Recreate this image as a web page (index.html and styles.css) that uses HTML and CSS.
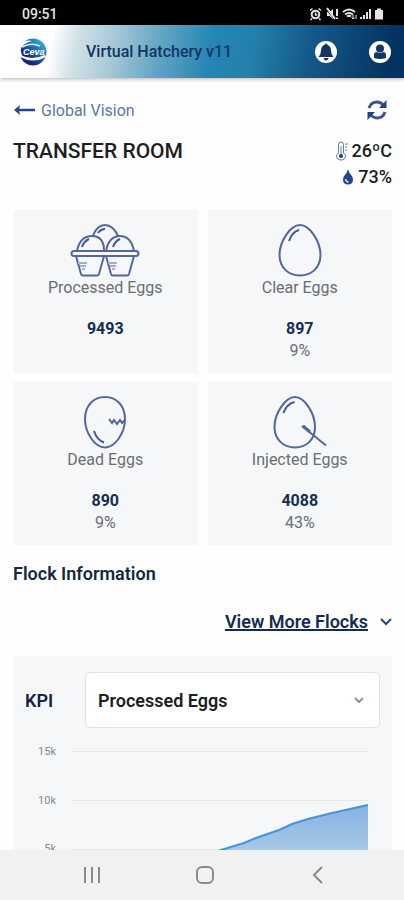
FILE: index.html
```html
<!DOCTYPE html>
<html lang="en">
<head>
<meta charset="utf-8">
<meta name="viewport" content="width=device-width, initial-scale=1">
<title>Virtual Hatchery</title>
<link rel="stylesheet" href="styles.css">
</head>
<body>
<div class="status">
  <time>09:51</time>
  <svg width="76" height="14" viewBox="0 0 76 14" fill="none" stroke="#e4e4e4" aria-hidden="true">
    <circle cx="6.5" cy="7.5" r="3.8" stroke-width="2"/><path d="M1 3.5 3.5 1.5M12 3.5 9.5 1.5M3 11.5 1.5 13M10 11.5l1.5 1.500M6.500 5.500v2.500h2" stroke-width="1.500"/>
    <path d="M18 5h2.500l3.500-3v10l-3.500-3H18z" fill="#e4e4e4" stroke="none"/><path d="m17 2 8 10" stroke="#000"/><path d="m18 1 8 11M28 2v7m0 1.500v1.500" stroke-width="2"/>
    <path d="M34 5q6-5 12 0M36 7.500q4-3 8 0M38 9.500q2-1.500 4 0" stroke-width="2"/><path d="M44 8v4m-1.500-1.500L44 12l1.500-1.500M47 12V8" stroke-width="1"/>
    <path d="M52 12v-2m3 2V8m3 4V5m3 7V2" stroke-width="2"/>
    <path d="M66 3h2V1.500h4V3h2v9.500h-8z" fill="#e4e4e4" stroke="none"/>
  </svg>
</div>
<header class="bar">
  <svg class="logo" width="28" height="28" viewBox="0 0 28 28" role="img" aria-label="Ceva">
    <defs><linearGradient id="globe" x1="0" y1="1" x2="1" y2="0"><stop offset=".3" stop-color="#15277c"/><stop offset=".8" stop-color="#2ba0d0"/></linearGradient></defs>
    <circle cx="14" cy="14" r="13.500" fill="url(#globe)"/>
    <path d="M0 6Q7 1 13 3Q5 5 2 10Q1 13 3 17L0 20z" fill="#fff"/>
    <path d="M2 17Q12 23 26 17L27 19Q14 26 1 19z" fill="#fff"/>
    <path d="M3 9Q12 4 21 8" fill="none" stroke="#dceefa" stroke-width="1.500"/>
    <text x="4" y="17" class="logo-text">Ceva</text>
  </svg>
  <h1 class="brand">Virtual Hatchery v11</h1>
  <div class="actions">
    <button class="round" aria-label="Notifications"><svg width="22" height="22" viewBox="0 0 22 22"><circle cx="11" cy="11" r="11" fill="#fff"/><path d="M11 2.500q1.500 0 1.500 1.500Q16 5 16 9.500q0 4 2.500 6.500h-15Q6 13.500 6 9.500 6 5 9.500 4q0-1.500 1.500-1.500zM8.500 17h5Q13 19.500 11 19.500T8.500 17z" fill="#123564"/></svg></button>
    <button class="round" aria-label="Account"><svg width="22" height="22" viewBox="0 0 22 22"><circle cx="11" cy="11" r="11" fill="#fff"/><circle cx="11" cy="7.500" r="4" fill="#123564"/><path d="M5 17v-3q0-3 3-3 3 2 6 0 3 0 3 3v3q-6 2-12 0z" fill="#123564"/></svg></button>
  </div>
</header>
<main class="page">
  <div class="row top">
    <a class="back" href="#"><svg width="22" height="10" viewBox="0 0 22 10" aria-hidden="true"><path d="M22 5H4" fill="none" stroke="#25458a" stroke-width="2.500"/><path d="M7 0 1 5l6 5-1-5z" fill="#25458a"/></svg>Global Vision</a>
    <button class="refresh" aria-label="Refresh"><svg width="20" height="20" viewBox="0 0 20 20"><path d="M2 8Q4 2 10 2q4 0 6.500 3.500M18 12q-2 6-8 6-4 0-6.500-3.500" fill="none" stroke="#3c5690" stroke-width="3"/><path d="M19.500 0v8H12zM.5 20v-8H8z" fill="#254282"/></svg></button>
  </div>
  <div class="row heading">
    <h2 class="room">TRANSFER ROOM</h2>
    <div class="climate">
      <span class="reading"><svg width="12" height="20" viewBox="0 0 12 20" fill="none" stroke="#6478aa" aria-hidden="true"><path d="M2.500 12V3.500Q2.500 1 5 1t2.500 2.500V12Q9.500 13.500 9.500 15 9.500 19 5 19T.5 15q0-1.500 2-3z"/><path d="M9 3h3M9 6h2M9 9h2"/><path d="M5 5v8"/><circle cx="5" cy="15" r="2" fill="#183b80" stroke="none"/></svg>26ºC</span>
      <span class="reading"><svg width="12" height="16" viewBox="0 0 12 16" aria-hidden="true"><path d="M6 0q1 4 3.500 6.500Q11 8 11 10.500q0 5-5 5t-5-5Q1 8 2.500 6.500 5 4 6 0z" fill="#24458c"/><path d="M3.500 10q.5 3 3 3" fill="none" stroke="#dce5f3" stroke-width="1.500"/></svg>73%</span>
    </div>
  </div>
  <section class="cards">
    <article class="card">
      <svg width="70" height="54" viewBox="0 0 70 54" class="line" aria-hidden="true">
        <path d="M23 13Q27 2 35 2t13 11M7 28Q10 13 22 13t12 15M36 28q3-15 14-15t14 15"/>
        <rect x="1.500" y="28" width="67" height="5" rx="2.500"/>
        <path d="M6 33l5 18q.5 1.500 2 1.500h14q1.500 0 2-1.500l5-18M36 33l5 18q.5 1.500 2 1.500h14q1.500 0 2-1.500l5-18"/>
        <path class="shine" d="M28 10q3-4 7-4M12 24q2-6 7-8M43 24q2-6 7-8"/>
        <path class="soft" d="M8 40h9M10 43h6M12 46h3M38 40h9M40 43h6M42 46h3"/>
      </svg>
      <h3>Processed Eggs</h3><strong>9493</strong>
    </article>
    <article class="card">
      <svg width="70" height="54" viewBox="0 0 70 54" class="line" aria-hidden="true"><path d="M35 2C45 2 55.500 19 55.500 32S46 52.500 35 52.500 14.500 45 14.500 32 25 2 35 2z"/><path class="shine" d="M24 18q3-9 10-11"/></svg>
      <h3>Clear Eggs</h3><strong>897</strong><span>9%</span>
    </article>
    <article class="card">
      <svg width="70" height="54" viewBox="0 0 70 54" class="line" aria-hidden="true"><path d="M35 52.500C25 52.500 15 38 15 24S24 2 35 2s20 8 20 22-10 28.500-20 28.500z"/><path class="shine" d="M24 36q3 9 10 11.500"/><path d="m39 24 3 4 2-3 3 4 3-4 2 3 3-3"/></svg>
      <h3>Dead Eggs</h3><strong>890</strong><span>9%</span>
    </article>
    <article class="card">
      <svg width="70" height="54" viewBox="0 0 70 54" class="line" aria-hidden="true"><path d="M30 2C40 2 50 19 50 32S41 52.500 30 52.500 9.500 45 9.500 32 20 2 30 2z"/><path class="shine" d="M18.500 18q3-9 11-11"/><path d="m37 31 24 19.500"/><path d="m38 31 7 6" class="needle"/></svg>
      <h3>Injected Eggs</h3><strong>4088</strong><span>43%</span>
    </article>
  </section>
  <h2 class="flock">Flock Information</h2>
  <a class="more" href="#"><span>View More Flocks</span><svg width="12" height="8" viewBox="0 0 12 8" aria-hidden="true"><path d="m1 1 5 5 5-5" fill="none" stroke="#294580" stroke-width="2"/></svg></a>
  <section class="panel">
    <div class="kpi">
      <label for="kpi">KPI</label>
      <div class="picker">
        <select id="kpi"><option>Processed Eggs</option><option>Clear Eggs</option><option>Dead Eggs</option><option>Injected Eggs</option></select>
        <svg width="10" height="6" viewBox="0 0 10 6" aria-hidden="true"><path d="m1 1 4 4 4-4" fill="none" stroke="#8c9299" stroke-width="2"/></svg>
      </div>
    </div>
    <div class="chart">
      <div class="ticks"><span>15k</span><span>10k</span><span>5k</span></div>
      <svg class="plot" viewBox="0 0 296 148" preserveAspectRatio="none" role="img" aria-label="Processed eggs over time">
        <defs><linearGradient id="fill" x1="0" y1="0" x2="0" y2="1"><stop offset="0" stop-color="#84b3e2"/><stop offset="1" stop-color="#cfdfec"/></linearGradient></defs>
        <path d="M0 .5h296M0 49.500h296M0 98.500h296M0 147.500h296" stroke="#e5e8eb"/>
        <path d="M0 147 70 130 149 99 172 92 184 87 207 79 220 73 236 68 260 62 296 54V148H0z" fill="url(#fill)"/>
        <path d="M0 147 70 130 149 99 172 92 184 87 207 79 220 73 236 68 260 62 296 54" fill="none" stroke="#4594db" stroke-width="2"/>
      </svg>
    </div>
  </section>
</main>
<nav class="system">
  <button aria-label="Recent apps"><svg width="18" height="18" viewBox="0 0 18 18"><path d="M2 1v16M9 1v16M16 1v16"/></svg></button>
  <button aria-label="Home"><svg width="18" height="18" viewBox="0 0 18 18"><rect x="1" y="1" width="16" height="16" rx="5"/></svg></button>
  <button aria-label="Back"><svg width="18" height="18" viewBox="0 0 18 18"><path d="m13 1-8 8 8 8"/></svg></button>
</nav>
</body>
</html>
```
FILE: styles.css
```css
* { box-sizing: border-box; }
body {
  margin: 0;
  height: 100vh;
  display: flex;
  flex-direction: column;
  background: #fefefe;
  color: #1c1e21;
  font-family: Roboto, "Liberation Sans", sans-serif;
}
h1, h2, h3 { margin: 0; font-weight: 600; }
button { padding: 0; border: 0; background: none; }
svg { display: block; flex: none; }
.status {
  height: 25px;
  flex: none;
  display: flex;
  align-items: center;
  justify-content: space-between;
  padding: 2px 19px 0 22px;
  background: #000;
  color: #e4e4e4;
  font-size: 14px;
  font-weight: 500;
}
.bar {
  height: 53px;
  flex: none;
  display: flex;
  align-items: center;
  padding: 0 13px 0 19px;
  background: linear-gradient(100deg, #fff 13%, #d3e2e8 19%, #a3c6d6 29%, #66a6c4 39%, #2586b4 52%, #2480ab 62%, #14598a 76%, #053361 96%);
  box-shadow: 0 1px 4px rgba(0, 0, 0, .3);
}
.logo-text { fill: #fff; font: italic 700 9px "Liberation Sans", sans-serif; }
.brand { margin-left: 39px; color: #0f3764; font-size: 16px; font-weight: 500; }
.actions { margin-left: auto; display: flex; gap: 32px; }
.page { flex: 1; min-height: 0; overflow: hidden; padding: 20px 12px 0 13px; }
.row { display: flex; justify-content: space-between; }
.top { align-items: center; height: 24px; padding-right: 5px; }
.back { display: flex; align-items: center; gap: 6px; color: #6474a3; font-size: 16px; text-decoration: none; }
.heading { margin-top: 16px; }
.room { font-size: 21px; font-weight: 500; line-height: 26px; }
.climate { display: flex; flex-direction: column; align-items: flex-end; font-size: 18px; font-weight: 500; line-height: 26px; }
.reading { display: flex; align-items: center; gap: 4px; }
.cards { display: grid; grid-template-columns: 1fr 1fr; gap: 9px 10px; margin-top: 20px; }
.card {
  height: 163px;
  display: flex;
  flex-direction: column;
  align-items: center;
  padding-top: 13px;
  background: #f5f7f9;
  color: #6b6e72;
  font-size: 16px;
  line-height: 22px;
}
.card h3 { font-size: 16px; font-weight: 400; line-height: 22px; }
.card strong { margin-top: 19px; color: #152e50; font-size: 16px; }
.line { fill: none; stroke: #53669e; stroke-width: 2; }
.line .shine { stroke: #40559a; }
.line .soft { stroke: #a4aec9; }
.line .needle { stroke-width: 3; }
.flock { margin-top: 17px; color: #16283e; font-size: 18px; line-height: 24px; }
.more {
  display: flex;
  align-items: center;
  justify-content: flex-end;
  gap: 12px;
  margin-top: 24px;
  color: #162b4d;
  font-size: 18px;
  font-weight: 600;
  line-height: 24px;
  text-decoration-thickness: 2px;
}
.panel { margin-top: 22px; padding: 16px 12px; background: #f5f7f9; }
.kpi { display: flex; align-items: center; color: #142442; font-size: 18px; font-weight: 600; }
.kpi label { width: 60px; }
.picker { flex: 1; position: relative; }
.picker select {
  appearance: none;
  display: block;
  width: 100%;
  height: 56px;
  padding: 0 32px 0 12px;
  border: 1px solid #e0e3e6;
  border-radius: 5px;
  background: #fff;
  color: #1c1e21;
  font: 600 18px Roboto, sans-serif;
}
.picker svg { position: absolute; right: 16px; top: 25px; pointer-events: none; }
.chart { display: flex; gap: 16px; margin-top: 16px; padding: 7px 12px 0 0; }
.ticks { width: 31px; height: 110px; margin-top: -6px; display: flex; flex-direction: column; justify-content: space-between; text-align: right; color: #85898d; font-size: 11px; line-height: 13px; }
.plot { flex: 1; min-width: 0; height: 148px; }
.system {
  height: 50px;
  flex: none;
  display: flex;
  align-items: center;
  justify-content: center;
  gap: 95px;
  padding-left: 6px;
  background: #f1f1f1;
}
.system svg { fill: none; stroke: #8b8b8b; stroke-width: 2; }
```
